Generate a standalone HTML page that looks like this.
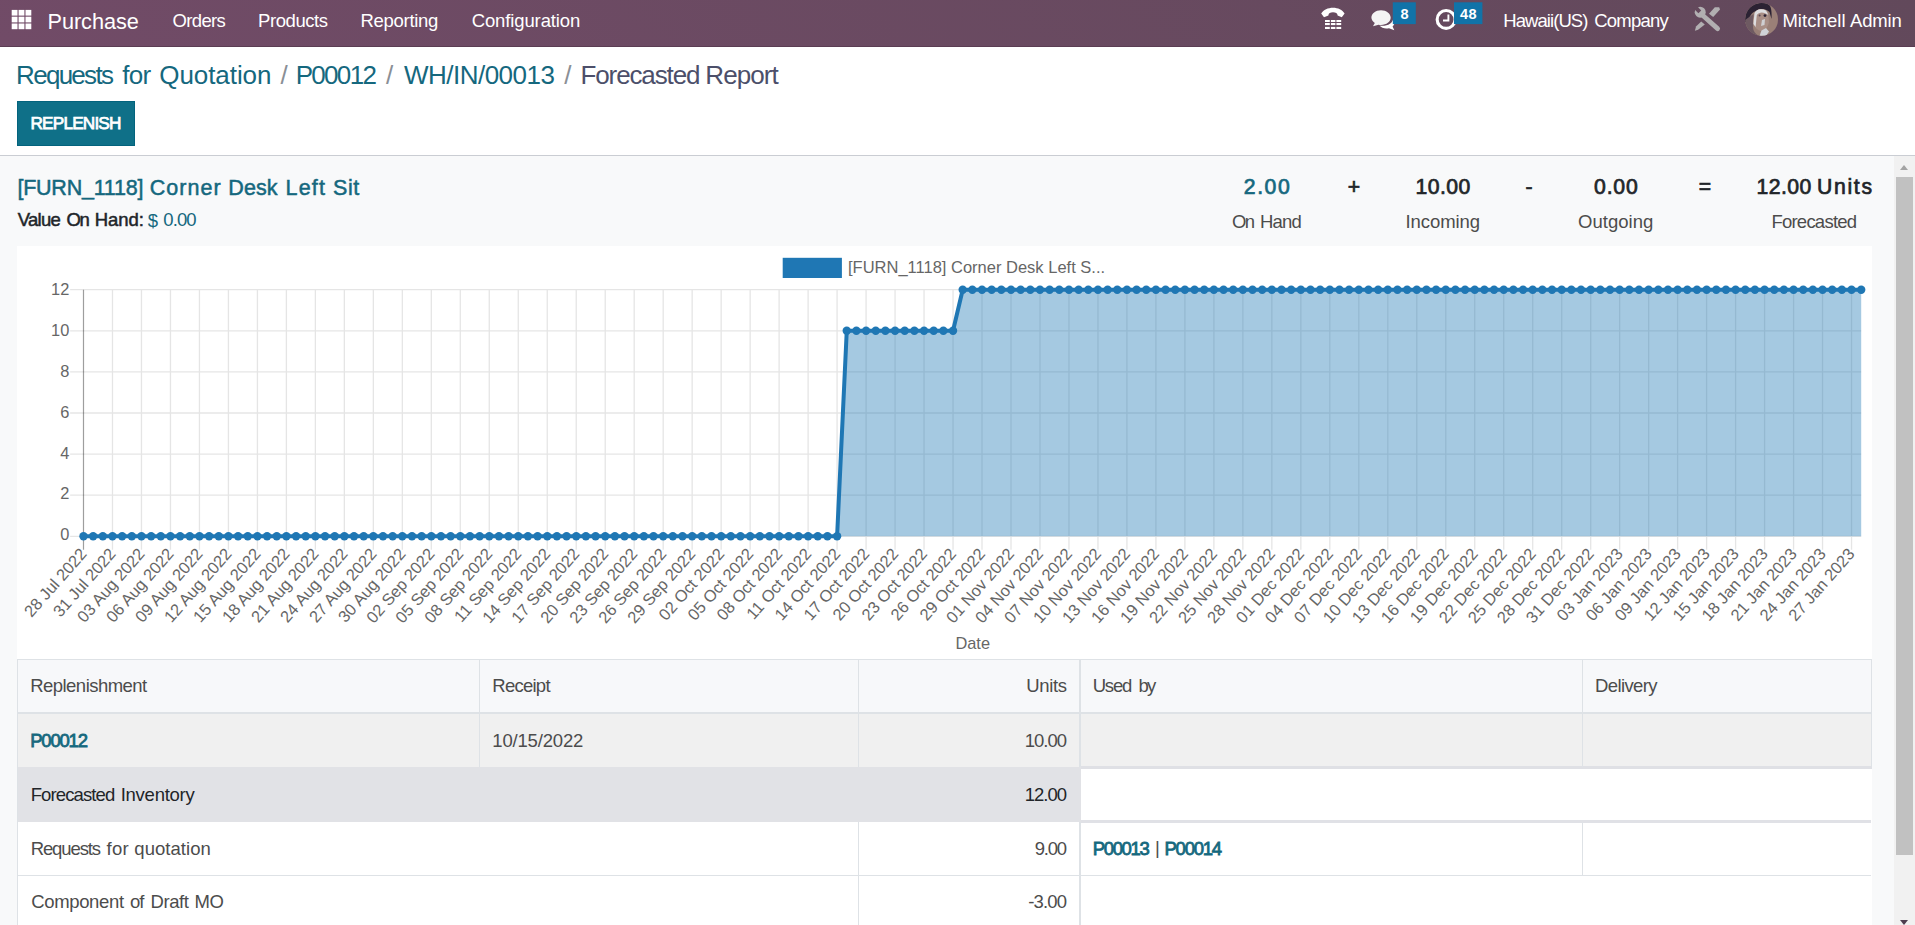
<!DOCTYPE html>
<html lang="en">
<head>
<meta charset="utf-8">
<title>Forecasted Report</title>
<style>
html,body{margin:0;padding:0;}
body{width:1915px;height:925px;overflow:hidden;position:relative;background:#f8f9fa;font-family:"Liberation Sans",sans-serif;color:#4c4c4c;}
.abs{position:absolute;}
.t{position:absolute;white-space:nowrap;line-height:1;}
#nav{left:0;top:0;width:1915px;height:46px;background:linear-gradient(45deg,#714b67,#62495b);border-bottom:1px solid #5b3d53;}
#nav .t{color:#fff;}
#cp{left:0;top:47px;width:1915px;height:108px;background:#fff;border-bottom:1px solid #cacdd3;}
#btn{left:17px;top:101px;width:118px;height:45px;background:#0f7088;box-sizing:border-box;border:1px solid #03637d;}
.link{color:#1b6779;}
#content{left:0;top:156px;width:1894px;height:769px;background:#f8f9fa;}
#chartbox{left:17px;top:246px;width:1855px;height:413px;background:#fff;}
svg.chart{position:absolute;left:0;top:0;font-family:"Liberation Sans",sans-serif;}
#sb{left:1894px;top:156px;width:21px;height:769px;background:#f1f1f1;}
#sbthumb{left:1896px;top:177px;width:17px;height:678px;background:#c1c1c1;}
.arr{position:absolute;width:0;height:0;border-left:4.6px solid transparent;border-right:4.6px solid transparent;}
.cell{position:absolute;box-sizing:border-box;}
</style>
</head>
<body>
<div id="nav" class="abs"></div>
<div id="cp" class="abs"></div>
<div id="content" class="abs"></div>
<div id="btn" class="abs"></div>
<div id="chartbox" class="abs"><svg class="chart" width="1855" height="413" viewBox="17 246 1855 413">
<path d="M112.48 289.70V549.7 M141.47 289.70V549.7 M170.45 289.70V549.7 M199.44 289.70V549.7 M228.42 289.70V549.7 M257.41 289.70V549.7 M286.39 289.70V549.7 M315.37 289.70V549.7 M344.36 289.70V549.7 M373.34 289.70V549.7 M402.33 289.70V549.7 M431.31 289.70V549.7 M460.29 289.70V549.7 M489.28 289.70V549.7 M518.26 289.70V549.7 M547.25 289.70V549.7 M576.23 289.70V549.7 M605.22 289.70V549.7 M634.20 289.70V549.7 M663.18 289.70V549.7 M692.17 289.70V549.7 M721.15 289.70V549.7 M750.14 289.70V549.7 M779.12 289.70V549.7 M808.11 289.70V549.7 M837.09 289.70V549.7 M866.07 289.70V549.7 M895.06 289.70V549.7 M924.04 289.70V549.7 M953.03 289.70V549.7 M982.01 289.70V549.7 M1010.99 289.70V549.7 M1039.98 289.70V549.7 M1068.96 289.70V549.7 M1097.95 289.70V549.7 M1126.93 289.70V549.7 M1155.92 289.70V549.7 M1184.90 289.70V549.7 M1213.88 289.70V549.7 M1242.87 289.70V549.7 M1271.85 289.70V549.7 M1300.84 289.70V549.7 M1329.82 289.70V549.7 M1358.80 289.70V549.7 M1387.79 289.70V549.7 M1416.77 289.70V549.7 M1445.76 289.70V549.7 M1474.74 289.70V549.7 M1503.73 289.70V549.7 M1532.71 289.70V549.7 M1561.69 289.70V549.7 M1590.68 289.70V549.7 M1619.66 289.70V549.7 M1648.65 289.70V549.7 M1677.63 289.70V549.7 M1706.62 289.70V549.7 M1735.60 289.70V549.7 M1764.58 289.70V549.7 M1793.57 289.70V549.7 M1822.55 289.70V549.7 M1851.54 289.70V549.7 M70.1 536.30H1861.20 M70.1 495.20H1861.20 M70.1 454.10H1861.20 M70.1 413.00H1861.20 M70.1 371.90H1861.20 M70.1 330.80H1861.20 M70.1 289.70H1861.20" stroke="#000" stroke-opacity="0.1" stroke-width="1.33" fill="none"/>
<path d="M83.50 289.70V549.7" stroke="#000" stroke-opacity="0.38" stroke-width="1.2" fill="none"/>
<path d="M83.50 536.30 L93.16 536.30 L102.82 536.30 L112.48 536.30 L122.15 536.30 L131.81 536.30 L141.47 536.30 L151.13 536.30 L160.79 536.30 L170.45 536.30 L180.11 536.30 L189.78 536.30 L199.44 536.30 L209.10 536.30 L218.76 536.30 L228.42 536.30 L238.08 536.30 L247.74 536.30 L257.41 536.30 L267.07 536.30 L276.73 536.30 L286.39 536.30 L296.05 536.30 L305.71 536.30 L315.37 536.30 L325.04 536.30 L334.70 536.30 L344.36 536.30 L354.02 536.30 L363.68 536.30 L373.34 536.30 L383.00 536.30 L392.66 536.30 L402.33 536.30 L411.99 536.30 L421.65 536.30 L431.31 536.30 L440.97 536.30 L450.63 536.30 L460.29 536.30 L469.96 536.30 L479.62 536.30 L489.28 536.30 L498.94 536.30 L508.60 536.30 L518.26 536.30 L527.92 536.30 L537.59 536.30 L547.25 536.30 L556.91 536.30 L566.57 536.30 L576.23 536.30 L585.89 536.30 L595.55 536.30 L605.22 536.30 L614.88 536.30 L624.54 536.30 L634.20 536.30 L643.86 536.30 L653.52 536.30 L663.18 536.30 L672.85 536.30 L682.51 536.30 L692.17 536.30 L701.83 536.30 L711.49 536.30 L721.15 536.30 L730.81 536.30 L740.48 536.30 L750.14 536.30 L759.80 536.30 L769.46 536.30 L779.12 536.30 L788.78 536.30 L798.44 536.30 L808.11 536.30 L817.77 536.30 L827.43 536.30 L837.09 536.30 L846.75 330.80 L856.41 330.80 L866.07 330.80 L875.73 330.80 L885.40 330.80 L895.06 330.80 L904.72 330.80 L914.38 330.80 L924.04 330.80 L933.70 330.80 L943.36 330.80 L953.03 330.80 L962.69 289.70 L972.35 289.70 L982.01 289.70 L991.67 289.70 L1001.33 289.70 L1010.99 289.70 L1020.66 289.70 L1030.32 289.70 L1039.98 289.70 L1049.64 289.70 L1059.30 289.70 L1068.96 289.70 L1078.62 289.70 L1088.29 289.70 L1097.95 289.70 L1107.61 289.70 L1117.27 289.70 L1126.93 289.70 L1136.59 289.70 L1146.25 289.70 L1155.92 289.70 L1165.58 289.70 L1175.24 289.70 L1184.90 289.70 L1194.56 289.70 L1204.22 289.70 L1213.88 289.70 L1223.55 289.70 L1233.21 289.70 L1242.87 289.70 L1252.53 289.70 L1262.19 289.70 L1271.85 289.70 L1281.51 289.70 L1291.17 289.70 L1300.84 289.70 L1310.50 289.70 L1320.16 289.70 L1329.82 289.70 L1339.48 289.70 L1349.14 289.70 L1358.80 289.70 L1368.47 289.70 L1378.13 289.70 L1387.79 289.70 L1397.45 289.70 L1407.11 289.70 L1416.77 289.70 L1426.43 289.70 L1436.10 289.70 L1445.76 289.70 L1455.42 289.70 L1465.08 289.70 L1474.74 289.70 L1484.40 289.70 L1494.06 289.70 L1503.73 289.70 L1513.39 289.70 L1523.05 289.70 L1532.71 289.70 L1542.37 289.70 L1552.03 289.70 L1561.69 289.70 L1571.36 289.70 L1581.02 289.70 L1590.68 289.70 L1600.34 289.70 L1610.00 289.70 L1619.66 289.70 L1629.32 289.70 L1638.99 289.70 L1648.65 289.70 L1658.31 289.70 L1667.97 289.70 L1677.63 289.70 L1687.29 289.70 L1696.95 289.70 L1706.62 289.70 L1716.28 289.70 L1725.94 289.70 L1735.60 289.70 L1745.26 289.70 L1754.92 289.70 L1764.58 289.70 L1774.25 289.70 L1783.91 289.70 L1793.57 289.70 L1803.23 289.70 L1812.89 289.70 L1822.55 289.70 L1832.21 289.70 L1841.87 289.70 L1851.54 289.70 L1861.20 289.70 L1861.20 536.3 L83.50 536.3 Z" fill="#1f77b4" fill-opacity="0.4"/>
<path d="M83.50 536.30 L93.16 536.30 L102.82 536.30 L112.48 536.30 L122.15 536.30 L131.81 536.30 L141.47 536.30 L151.13 536.30 L160.79 536.30 L170.45 536.30 L180.11 536.30 L189.78 536.30 L199.44 536.30 L209.10 536.30 L218.76 536.30 L228.42 536.30 L238.08 536.30 L247.74 536.30 L257.41 536.30 L267.07 536.30 L276.73 536.30 L286.39 536.30 L296.05 536.30 L305.71 536.30 L315.37 536.30 L325.04 536.30 L334.70 536.30 L344.36 536.30 L354.02 536.30 L363.68 536.30 L373.34 536.30 L383.00 536.30 L392.66 536.30 L402.33 536.30 L411.99 536.30 L421.65 536.30 L431.31 536.30 L440.97 536.30 L450.63 536.30 L460.29 536.30 L469.96 536.30 L479.62 536.30 L489.28 536.30 L498.94 536.30 L508.60 536.30 L518.26 536.30 L527.92 536.30 L537.59 536.30 L547.25 536.30 L556.91 536.30 L566.57 536.30 L576.23 536.30 L585.89 536.30 L595.55 536.30 L605.22 536.30 L614.88 536.30 L624.54 536.30 L634.20 536.30 L643.86 536.30 L653.52 536.30 L663.18 536.30 L672.85 536.30 L682.51 536.30 L692.17 536.30 L701.83 536.30 L711.49 536.30 L721.15 536.30 L730.81 536.30 L740.48 536.30 L750.14 536.30 L759.80 536.30 L769.46 536.30 L779.12 536.30 L788.78 536.30 L798.44 536.30 L808.11 536.30 L817.77 536.30 L827.43 536.30 L837.09 536.30 L846.75 330.80 L856.41 330.80 L866.07 330.80 L875.73 330.80 L885.40 330.80 L895.06 330.80 L904.72 330.80 L914.38 330.80 L924.04 330.80 L933.70 330.80 L943.36 330.80 L953.03 330.80 L962.69 289.70 L972.35 289.70 L982.01 289.70 L991.67 289.70 L1001.33 289.70 L1010.99 289.70 L1020.66 289.70 L1030.32 289.70 L1039.98 289.70 L1049.64 289.70 L1059.30 289.70 L1068.96 289.70 L1078.62 289.70 L1088.29 289.70 L1097.95 289.70 L1107.61 289.70 L1117.27 289.70 L1126.93 289.70 L1136.59 289.70 L1146.25 289.70 L1155.92 289.70 L1165.58 289.70 L1175.24 289.70 L1184.90 289.70 L1194.56 289.70 L1204.22 289.70 L1213.88 289.70 L1223.55 289.70 L1233.21 289.70 L1242.87 289.70 L1252.53 289.70 L1262.19 289.70 L1271.85 289.70 L1281.51 289.70 L1291.17 289.70 L1300.84 289.70 L1310.50 289.70 L1320.16 289.70 L1329.82 289.70 L1339.48 289.70 L1349.14 289.70 L1358.80 289.70 L1368.47 289.70 L1378.13 289.70 L1387.79 289.70 L1397.45 289.70 L1407.11 289.70 L1416.77 289.70 L1426.43 289.70 L1436.10 289.70 L1445.76 289.70 L1455.42 289.70 L1465.08 289.70 L1474.74 289.70 L1484.40 289.70 L1494.06 289.70 L1503.73 289.70 L1513.39 289.70 L1523.05 289.70 L1532.71 289.70 L1542.37 289.70 L1552.03 289.70 L1561.69 289.70 L1571.36 289.70 L1581.02 289.70 L1590.68 289.70 L1600.34 289.70 L1610.00 289.70 L1619.66 289.70 L1629.32 289.70 L1638.99 289.70 L1648.65 289.70 L1658.31 289.70 L1667.97 289.70 L1677.63 289.70 L1687.29 289.70 L1696.95 289.70 L1706.62 289.70 L1716.28 289.70 L1725.94 289.70 L1735.60 289.70 L1745.26 289.70 L1754.92 289.70 L1764.58 289.70 L1774.25 289.70 L1783.91 289.70 L1793.57 289.70 L1803.23 289.70 L1812.89 289.70 L1822.55 289.70 L1832.21 289.70 L1841.87 289.70 L1851.54 289.70 L1861.20 289.70" fill="none" stroke="#1f77b4" stroke-width="4" stroke-linejoin="round"/>
<g fill="#1f77b4"><circle cx="83.50" cy="536.30" r="4.2"/><circle cx="93.16" cy="536.30" r="4.2"/><circle cx="102.82" cy="536.30" r="4.2"/><circle cx="112.48" cy="536.30" r="4.2"/><circle cx="122.15" cy="536.30" r="4.2"/><circle cx="131.81" cy="536.30" r="4.2"/><circle cx="141.47" cy="536.30" r="4.2"/><circle cx="151.13" cy="536.30" r="4.2"/><circle cx="160.79" cy="536.30" r="4.2"/><circle cx="170.45" cy="536.30" r="4.2"/><circle cx="180.11" cy="536.30" r="4.2"/><circle cx="189.78" cy="536.30" r="4.2"/><circle cx="199.44" cy="536.30" r="4.2"/><circle cx="209.10" cy="536.30" r="4.2"/><circle cx="218.76" cy="536.30" r="4.2"/><circle cx="228.42" cy="536.30" r="4.2"/><circle cx="238.08" cy="536.30" r="4.2"/><circle cx="247.74" cy="536.30" r="4.2"/><circle cx="257.41" cy="536.30" r="4.2"/><circle cx="267.07" cy="536.30" r="4.2"/><circle cx="276.73" cy="536.30" r="4.2"/><circle cx="286.39" cy="536.30" r="4.2"/><circle cx="296.05" cy="536.30" r="4.2"/><circle cx="305.71" cy="536.30" r="4.2"/><circle cx="315.37" cy="536.30" r="4.2"/><circle cx="325.04" cy="536.30" r="4.2"/><circle cx="334.70" cy="536.30" r="4.2"/><circle cx="344.36" cy="536.30" r="4.2"/><circle cx="354.02" cy="536.30" r="4.2"/><circle cx="363.68" cy="536.30" r="4.2"/><circle cx="373.34" cy="536.30" r="4.2"/><circle cx="383.00" cy="536.30" r="4.2"/><circle cx="392.66" cy="536.30" r="4.2"/><circle cx="402.33" cy="536.30" r="4.2"/><circle cx="411.99" cy="536.30" r="4.2"/><circle cx="421.65" cy="536.30" r="4.2"/><circle cx="431.31" cy="536.30" r="4.2"/><circle cx="440.97" cy="536.30" r="4.2"/><circle cx="450.63" cy="536.30" r="4.2"/><circle cx="460.29" cy="536.30" r="4.2"/><circle cx="469.96" cy="536.30" r="4.2"/><circle cx="479.62" cy="536.30" r="4.2"/><circle cx="489.28" cy="536.30" r="4.2"/><circle cx="498.94" cy="536.30" r="4.2"/><circle cx="508.60" cy="536.30" r="4.2"/><circle cx="518.26" cy="536.30" r="4.2"/><circle cx="527.92" cy="536.30" r="4.2"/><circle cx="537.59" cy="536.30" r="4.2"/><circle cx="547.25" cy="536.30" r="4.2"/><circle cx="556.91" cy="536.30" r="4.2"/><circle cx="566.57" cy="536.30" r="4.2"/><circle cx="576.23" cy="536.30" r="4.2"/><circle cx="585.89" cy="536.30" r="4.2"/><circle cx="595.55" cy="536.30" r="4.2"/><circle cx="605.22" cy="536.30" r="4.2"/><circle cx="614.88" cy="536.30" r="4.2"/><circle cx="624.54" cy="536.30" r="4.2"/><circle cx="634.20" cy="536.30" r="4.2"/><circle cx="643.86" cy="536.30" r="4.2"/><circle cx="653.52" cy="536.30" r="4.2"/><circle cx="663.18" cy="536.30" r="4.2"/><circle cx="672.85" cy="536.30" r="4.2"/><circle cx="682.51" cy="536.30" r="4.2"/><circle cx="692.17" cy="536.30" r="4.2"/><circle cx="701.83" cy="536.30" r="4.2"/><circle cx="711.49" cy="536.30" r="4.2"/><circle cx="721.15" cy="536.30" r="4.2"/><circle cx="730.81" cy="536.30" r="4.2"/><circle cx="740.48" cy="536.30" r="4.2"/><circle cx="750.14" cy="536.30" r="4.2"/><circle cx="759.80" cy="536.30" r="4.2"/><circle cx="769.46" cy="536.30" r="4.2"/><circle cx="779.12" cy="536.30" r="4.2"/><circle cx="788.78" cy="536.30" r="4.2"/><circle cx="798.44" cy="536.30" r="4.2"/><circle cx="808.11" cy="536.30" r="4.2"/><circle cx="817.77" cy="536.30" r="4.2"/><circle cx="827.43" cy="536.30" r="4.2"/><circle cx="837.09" cy="536.30" r="4.2"/><circle cx="846.75" cy="330.80" r="4.2"/><circle cx="856.41" cy="330.80" r="4.2"/><circle cx="866.07" cy="330.80" r="4.2"/><circle cx="875.73" cy="330.80" r="4.2"/><circle cx="885.40" cy="330.80" r="4.2"/><circle cx="895.06" cy="330.80" r="4.2"/><circle cx="904.72" cy="330.80" r="4.2"/><circle cx="914.38" cy="330.80" r="4.2"/><circle cx="924.04" cy="330.80" r="4.2"/><circle cx="933.70" cy="330.80" r="4.2"/><circle cx="943.36" cy="330.80" r="4.2"/><circle cx="953.03" cy="330.80" r="4.2"/><circle cx="962.69" cy="289.70" r="4.2"/><circle cx="972.35" cy="289.70" r="4.2"/><circle cx="982.01" cy="289.70" r="4.2"/><circle cx="991.67" cy="289.70" r="4.2"/><circle cx="1001.33" cy="289.70" r="4.2"/><circle cx="1010.99" cy="289.70" r="4.2"/><circle cx="1020.66" cy="289.70" r="4.2"/><circle cx="1030.32" cy="289.70" r="4.2"/><circle cx="1039.98" cy="289.70" r="4.2"/><circle cx="1049.64" cy="289.70" r="4.2"/><circle cx="1059.30" cy="289.70" r="4.2"/><circle cx="1068.96" cy="289.70" r="4.2"/><circle cx="1078.62" cy="289.70" r="4.2"/><circle cx="1088.29" cy="289.70" r="4.2"/><circle cx="1097.95" cy="289.70" r="4.2"/><circle cx="1107.61" cy="289.70" r="4.2"/><circle cx="1117.27" cy="289.70" r="4.2"/><circle cx="1126.93" cy="289.70" r="4.2"/><circle cx="1136.59" cy="289.70" r="4.2"/><circle cx="1146.25" cy="289.70" r="4.2"/><circle cx="1155.92" cy="289.70" r="4.2"/><circle cx="1165.58" cy="289.70" r="4.2"/><circle cx="1175.24" cy="289.70" r="4.2"/><circle cx="1184.90" cy="289.70" r="4.2"/><circle cx="1194.56" cy="289.70" r="4.2"/><circle cx="1204.22" cy="289.70" r="4.2"/><circle cx="1213.88" cy="289.70" r="4.2"/><circle cx="1223.55" cy="289.70" r="4.2"/><circle cx="1233.21" cy="289.70" r="4.2"/><circle cx="1242.87" cy="289.70" r="4.2"/><circle cx="1252.53" cy="289.70" r="4.2"/><circle cx="1262.19" cy="289.70" r="4.2"/><circle cx="1271.85" cy="289.70" r="4.2"/><circle cx="1281.51" cy="289.70" r="4.2"/><circle cx="1291.17" cy="289.70" r="4.2"/><circle cx="1300.84" cy="289.70" r="4.2"/><circle cx="1310.50" cy="289.70" r="4.2"/><circle cx="1320.16" cy="289.70" r="4.2"/><circle cx="1329.82" cy="289.70" r="4.2"/><circle cx="1339.48" cy="289.70" r="4.2"/><circle cx="1349.14" cy="289.70" r="4.2"/><circle cx="1358.80" cy="289.70" r="4.2"/><circle cx="1368.47" cy="289.70" r="4.2"/><circle cx="1378.13" cy="289.70" r="4.2"/><circle cx="1387.79" cy="289.70" r="4.2"/><circle cx="1397.45" cy="289.70" r="4.2"/><circle cx="1407.11" cy="289.70" r="4.2"/><circle cx="1416.77" cy="289.70" r="4.2"/><circle cx="1426.43" cy="289.70" r="4.2"/><circle cx="1436.10" cy="289.70" r="4.2"/><circle cx="1445.76" cy="289.70" r="4.2"/><circle cx="1455.42" cy="289.70" r="4.2"/><circle cx="1465.08" cy="289.70" r="4.2"/><circle cx="1474.74" cy="289.70" r="4.2"/><circle cx="1484.40" cy="289.70" r="4.2"/><circle cx="1494.06" cy="289.70" r="4.2"/><circle cx="1503.73" cy="289.70" r="4.2"/><circle cx="1513.39" cy="289.70" r="4.2"/><circle cx="1523.05" cy="289.70" r="4.2"/><circle cx="1532.71" cy="289.70" r="4.2"/><circle cx="1542.37" cy="289.70" r="4.2"/><circle cx="1552.03" cy="289.70" r="4.2"/><circle cx="1561.69" cy="289.70" r="4.2"/><circle cx="1571.36" cy="289.70" r="4.2"/><circle cx="1581.02" cy="289.70" r="4.2"/><circle cx="1590.68" cy="289.70" r="4.2"/><circle cx="1600.34" cy="289.70" r="4.2"/><circle cx="1610.00" cy="289.70" r="4.2"/><circle cx="1619.66" cy="289.70" r="4.2"/><circle cx="1629.32" cy="289.70" r="4.2"/><circle cx="1638.99" cy="289.70" r="4.2"/><circle cx="1648.65" cy="289.70" r="4.2"/><circle cx="1658.31" cy="289.70" r="4.2"/><circle cx="1667.97" cy="289.70" r="4.2"/><circle cx="1677.63" cy="289.70" r="4.2"/><circle cx="1687.29" cy="289.70" r="4.2"/><circle cx="1696.95" cy="289.70" r="4.2"/><circle cx="1706.62" cy="289.70" r="4.2"/><circle cx="1716.28" cy="289.70" r="4.2"/><circle cx="1725.94" cy="289.70" r="4.2"/><circle cx="1735.60" cy="289.70" r="4.2"/><circle cx="1745.26" cy="289.70" r="4.2"/><circle cx="1754.92" cy="289.70" r="4.2"/><circle cx="1764.58" cy="289.70" r="4.2"/><circle cx="1774.25" cy="289.70" r="4.2"/><circle cx="1783.91" cy="289.70" r="4.2"/><circle cx="1793.57" cy="289.70" r="4.2"/><circle cx="1803.23" cy="289.70" r="4.2"/><circle cx="1812.89" cy="289.70" r="4.2"/><circle cx="1822.55" cy="289.70" r="4.2"/><circle cx="1832.21" cy="289.70" r="4.2"/><circle cx="1841.87" cy="289.70" r="4.2"/><circle cx="1851.54" cy="289.70" r="4.2"/><circle cx="1861.20" cy="289.70" r="4.2"/></g>
<rect x="782.7" y="257.8" width="59.2" height="20.2" fill="#1f77b4"/>
<text x="848" y="272.9" font-size="16.5" fill="#666">[FURN_1118] Corner Desk Left S...</text>
<text x="69.3" y="540.40" font-size="16.4" fill="#666" text-anchor="end">0</text>
<text x="69.3" y="499.49" font-size="16.4" fill="#666" text-anchor="end">2</text>
<text x="69.3" y="458.58" font-size="16.4" fill="#666" text-anchor="end">4</text>
<text x="69.3" y="417.68" font-size="16.4" fill="#666" text-anchor="end">6</text>
<text x="69.3" y="376.77" font-size="16.4" fill="#666" text-anchor="end">8</text>
<text x="69.3" y="335.86" font-size="16.4" fill="#666" text-anchor="end">10</text>
<text x="69.3" y="294.95" font-size="16.4" fill="#666" text-anchor="end">12</text>
<text transform="translate(83.20 550.6) rotate(-48.5)" dy="0.36em" font-size="16.4" fill="#666" text-anchor="end">28 Jul 2022</text>
<text transform="translate(112.18 550.6) rotate(-48.5)" dy="0.36em" font-size="16.4" fill="#666" text-anchor="end">31 Jul 2022</text>
<text transform="translate(141.17 550.6) rotate(-48.5)" dy="0.36em" font-size="16.4" fill="#666" text-anchor="end">03 Aug 2022</text>
<text transform="translate(170.15 550.6) rotate(-48.5)" dy="0.36em" font-size="16.4" fill="#666" text-anchor="end">06 Aug 2022</text>
<text transform="translate(199.14 550.6) rotate(-48.5)" dy="0.36em" font-size="16.4" fill="#666" text-anchor="end">09 Aug 2022</text>
<text transform="translate(228.12 550.6) rotate(-48.5)" dy="0.36em" font-size="16.4" fill="#666" text-anchor="end">12 Aug 2022</text>
<text transform="translate(257.11 550.6) rotate(-48.5)" dy="0.36em" font-size="16.4" fill="#666" text-anchor="end">15 Aug 2022</text>
<text transform="translate(286.09 550.6) rotate(-48.5)" dy="0.36em" font-size="16.4" fill="#666" text-anchor="end">18 Aug 2022</text>
<text transform="translate(315.07 550.6) rotate(-48.5)" dy="0.36em" font-size="16.4" fill="#666" text-anchor="end">21 Aug 2022</text>
<text transform="translate(344.06 550.6) rotate(-48.5)" dy="0.36em" font-size="16.4" fill="#666" text-anchor="end">24 Aug 2022</text>
<text transform="translate(373.04 550.6) rotate(-48.5)" dy="0.36em" font-size="16.4" fill="#666" text-anchor="end">27 Aug 2022</text>
<text transform="translate(402.03 550.6) rotate(-48.5)" dy="0.36em" font-size="16.4" fill="#666" text-anchor="end">30 Aug 2022</text>
<text transform="translate(431.01 550.6) rotate(-48.5)" dy="0.36em" font-size="16.4" fill="#666" text-anchor="end">02 Sep 2022</text>
<text transform="translate(459.99 550.6) rotate(-48.5)" dy="0.36em" font-size="16.4" fill="#666" text-anchor="end">05 Sep 2022</text>
<text transform="translate(488.98 550.6) rotate(-48.5)" dy="0.36em" font-size="16.4" fill="#666" text-anchor="end">08 Sep 2022</text>
<text transform="translate(517.96 550.6) rotate(-48.5)" dy="0.36em" font-size="16.4" fill="#666" text-anchor="end">11 Sep 2022</text>
<text transform="translate(546.95 550.6) rotate(-48.5)" dy="0.36em" font-size="16.4" fill="#666" text-anchor="end">14 Sep 2022</text>
<text transform="translate(575.93 550.6) rotate(-48.5)" dy="0.36em" font-size="16.4" fill="#666" text-anchor="end">17 Sep 2022</text>
<text transform="translate(604.92 550.6) rotate(-48.5)" dy="0.36em" font-size="16.4" fill="#666" text-anchor="end">20 Sep 2022</text>
<text transform="translate(633.90 550.6) rotate(-48.5)" dy="0.36em" font-size="16.4" fill="#666" text-anchor="end">23 Sep 2022</text>
<text transform="translate(662.88 550.6) rotate(-48.5)" dy="0.36em" font-size="16.4" fill="#666" text-anchor="end">26 Sep 2022</text>
<text transform="translate(691.87 550.6) rotate(-48.5)" dy="0.36em" font-size="16.4" fill="#666" text-anchor="end">29 Sep 2022</text>
<text transform="translate(720.85 550.6) rotate(-48.5)" dy="0.36em" font-size="16.4" fill="#666" text-anchor="end">02 Oct 2022</text>
<text transform="translate(749.84 550.6) rotate(-48.5)" dy="0.36em" font-size="16.4" fill="#666" text-anchor="end">05 Oct 2022</text>
<text transform="translate(778.82 550.6) rotate(-48.5)" dy="0.36em" font-size="16.4" fill="#666" text-anchor="end">08 Oct 2022</text>
<text transform="translate(807.81 550.6) rotate(-48.5)" dy="0.36em" font-size="16.4" fill="#666" text-anchor="end">11 Oct 2022</text>
<text transform="translate(836.79 550.6) rotate(-48.5)" dy="0.36em" font-size="16.4" fill="#666" text-anchor="end">14 Oct 2022</text>
<text transform="translate(865.77 550.6) rotate(-48.5)" dy="0.36em" font-size="16.4" fill="#666" text-anchor="end">17 Oct 2022</text>
<text transform="translate(894.76 550.6) rotate(-48.5)" dy="0.36em" font-size="16.4" fill="#666" text-anchor="end">20 Oct 2022</text>
<text transform="translate(923.74 550.6) rotate(-48.5)" dy="0.36em" font-size="16.4" fill="#666" text-anchor="end">23 Oct 2022</text>
<text transform="translate(952.73 550.6) rotate(-48.5)" dy="0.36em" font-size="16.4" fill="#666" text-anchor="end">26 Oct 2022</text>
<text transform="translate(981.71 550.6) rotate(-48.5)" dy="0.36em" font-size="16.4" fill="#666" text-anchor="end">29 Oct 2022</text>
<text transform="translate(1010.69 550.6) rotate(-48.5)" dy="0.36em" font-size="16.4" fill="#666" text-anchor="end">01 Nov 2022</text>
<text transform="translate(1039.68 550.6) rotate(-48.5)" dy="0.36em" font-size="16.4" fill="#666" text-anchor="end">04 Nov 2022</text>
<text transform="translate(1068.66 550.6) rotate(-48.5)" dy="0.36em" font-size="16.4" fill="#666" text-anchor="end">07 Nov 2022</text>
<text transform="translate(1097.65 550.6) rotate(-48.5)" dy="0.36em" font-size="16.4" fill="#666" text-anchor="end">10 Nov 2022</text>
<text transform="translate(1126.63 550.6) rotate(-48.5)" dy="0.36em" font-size="16.4" fill="#666" text-anchor="end">13 Nov 2022</text>
<text transform="translate(1155.62 550.6) rotate(-48.5)" dy="0.36em" font-size="16.4" fill="#666" text-anchor="end">16 Nov 2022</text>
<text transform="translate(1184.60 550.6) rotate(-48.5)" dy="0.36em" font-size="16.4" fill="#666" text-anchor="end">19 Nov 2022</text>
<text transform="translate(1213.58 550.6) rotate(-48.5)" dy="0.36em" font-size="16.4" fill="#666" text-anchor="end">22 Nov 2022</text>
<text transform="translate(1242.57 550.6) rotate(-48.5)" dy="0.36em" font-size="16.4" fill="#666" text-anchor="end">25 Nov 2022</text>
<text transform="translate(1271.55 550.6) rotate(-48.5)" dy="0.36em" font-size="16.4" fill="#666" text-anchor="end">28 Nov 2022</text>
<text transform="translate(1300.54 550.6) rotate(-48.5)" dy="0.36em" font-size="16.4" fill="#666" text-anchor="end">01 Dec 2022</text>
<text transform="translate(1329.52 550.6) rotate(-48.5)" dy="0.36em" font-size="16.4" fill="#666" text-anchor="end">04 Dec 2022</text>
<text transform="translate(1358.50 550.6) rotate(-48.5)" dy="0.36em" font-size="16.4" fill="#666" text-anchor="end">07 Dec 2022</text>
<text transform="translate(1387.49 550.6) rotate(-48.5)" dy="0.36em" font-size="16.4" fill="#666" text-anchor="end">10 Dec 2022</text>
<text transform="translate(1416.47 550.6) rotate(-48.5)" dy="0.36em" font-size="16.4" fill="#666" text-anchor="end">13 Dec 2022</text>
<text transform="translate(1445.46 550.6) rotate(-48.5)" dy="0.36em" font-size="16.4" fill="#666" text-anchor="end">16 Dec 2022</text>
<text transform="translate(1474.44 550.6) rotate(-48.5)" dy="0.36em" font-size="16.4" fill="#666" text-anchor="end">19 Dec 2022</text>
<text transform="translate(1503.43 550.6) rotate(-48.5)" dy="0.36em" font-size="16.4" fill="#666" text-anchor="end">22 Dec 2022</text>
<text transform="translate(1532.41 550.6) rotate(-48.5)" dy="0.36em" font-size="16.4" fill="#666" text-anchor="end">25 Dec 2022</text>
<text transform="translate(1561.39 550.6) rotate(-48.5)" dy="0.36em" font-size="16.4" fill="#666" text-anchor="end">28 Dec 2022</text>
<text transform="translate(1590.38 550.6) rotate(-48.5)" dy="0.36em" font-size="16.4" fill="#666" text-anchor="end">31 Dec 2022</text>
<text transform="translate(1619.36 550.6) rotate(-48.5)" dy="0.36em" font-size="16.4" fill="#666" text-anchor="end">03 Jan 2023</text>
<text transform="translate(1648.35 550.6) rotate(-48.5)" dy="0.36em" font-size="16.4" fill="#666" text-anchor="end">06 Jan 2023</text>
<text transform="translate(1677.33 550.6) rotate(-48.5)" dy="0.36em" font-size="16.4" fill="#666" text-anchor="end">09 Jan 2023</text>
<text transform="translate(1706.32 550.6) rotate(-48.5)" dy="0.36em" font-size="16.4" fill="#666" text-anchor="end">12 Jan 2023</text>
<text transform="translate(1735.30 550.6) rotate(-48.5)" dy="0.36em" font-size="16.4" fill="#666" text-anchor="end">15 Jan 2023</text>
<text transform="translate(1764.28 550.6) rotate(-48.5)" dy="0.36em" font-size="16.4" fill="#666" text-anchor="end">18 Jan 2023</text>
<text transform="translate(1793.27 550.6) rotate(-48.5)" dy="0.36em" font-size="16.4" fill="#666" text-anchor="end">21 Jan 2023</text>
<text transform="translate(1822.25 550.6) rotate(-48.5)" dy="0.36em" font-size="16.4" fill="#666" text-anchor="end">24 Jan 2023</text>
<text transform="translate(1851.24 550.6) rotate(-48.5)" dy="0.36em" font-size="16.4" fill="#666" text-anchor="end">27 Jan 2023</text>
<text x="972.7" y="648.9" font-size="16.4" fill="#666" text-anchor="middle">Date</text>
</svg></div>
<div class="cell" style="left:17px;top:659px;width:1855px;height:54px;background:#f7f8fa;"></div>
<div class="cell" style="left:17px;top:713px;width:1855px;height:54px;background:#f0f0f0;"></div>
<div class="cell" style="left:17px;top:767px;width:1063.7px;height:55.39999999999998px;background:#e1e2e6;"></div>
<div class="cell" style="left:1080.7px;top:767px;width:791.3px;height:55.39999999999998px;background:#ffffff;"></div>
<div class="cell" style="left:17px;top:822px;width:1855px;height:103px;background:#ffffff;"></div>
<div class="cell" style="left:17px;top:659px;width:1855px;height:1px;background:#dee2e6;"></div>
<div class="cell" style="left:17px;top:711.5px;width:1855px;height:2.0px;background:#dee2e6;"></div>
<div class="cell" style="left:1080.7px;top:766.3px;width:791.3px;height:2.7999999999999545px;background:#dfe0e5;"></div>
<div class="cell" style="left:1080.7px;top:820px;width:790.3px;height:3px;background:#e0e1e6;"></div>
<div class="cell" style="left:17px;top:875px;width:1854px;height:1px;background:#dee2e6;"></div>
<div class="cell" style="left:17px;top:659px;width:1px;height:266px;background:#dee2e6;"></div>
<div class="cell" style="left:1871px;top:659px;width:1px;height:108px;background:#dee2e6;"></div>
<div class="cell" style="left:479px;top:659px;width:1px;height:108px;background:#dee2e6;"></div>
<div class="cell" style="left:858px;top:659px;width:1px;height:108px;background:#dee2e6;"></div>
<div class="cell" style="left:1079.3px;top:659px;width:1.400000000000091px;height:108px;background:#dee2e6;"></div>
<div class="cell" style="left:1581.5px;top:659px;width:1.400000000000091px;height:108px;background:#dee2e6;"></div>
<div class="cell" style="left:858px;top:822px;width:1px;height:103px;background:#dee2e6;"></div>
<div class="cell" style="left:1079.3px;top:822px;width:1.400000000000091px;height:103px;background:#dee2e6;"></div>
<div class="cell" style="left:1581.5px;top:822px;width:1.400000000000091px;height:53px;background:#dee2e6;"></div>
<div id="sb" class="abs"></div>
<div id="sbthumb" class="abs"></div>
<div class="arr" style="left:1900px;top:165px;border-bottom:5px solid #a3a3a3"></div>
<div class="arr" style="left:1900px;top:920px;border-top:5px solid #4f3d4f"></div>
<svg class="abs" style="left:0;top:0" width="1915" height="46" viewBox="0 0 1915 46"><g fill="#fff"><rect x="11.7" y="9.9" width="5.8" height="5.7"/><rect x="18.6" y="9.9" width="5.8" height="5.7"/><rect x="25.5" y="9.9" width="5.8" height="5.7"/><rect x="11.7" y="16.7" width="5.8" height="5.7"/><rect x="18.6" y="16.7" width="5.8" height="5.7"/><rect x="25.5" y="16.7" width="5.8" height="5.7"/><rect x="11.7" y="23.5" width="5.8" height="5.7"/><rect x="18.6" y="23.5" width="5.8" height="5.7"/><rect x="25.5" y="23.5" width="5.8" height="5.7"/></g><!-- phone -->
<g fill="#fff">
<path d="M1321.2 13.6 C1323.5 9.8 1328 7.7 1333 7.7 C1338 7.7 1342.3 9.8 1344.6 13.6 L1341.8 17.3 L1337.6 15.6 C1337.6 13.2 1335.6 12.3 1333 12.3 C1330.4 12.3 1328.4 13.2 1328.4 15.6 L1324 17.3 Z"/>
<rect x="1325" y="20" width="4.8" height="2"/><rect x="1330.9" y="20" width="4.5" height="2"/><rect x="1336.4" y="20" width="4.8" height="2"/>
<rect x="1325" y="23" width="4.8" height="2.1"/><rect x="1330.9" y="23" width="4.5" height="2.1"/><rect x="1336.4" y="23" width="4.8" height="2.1"/>
<rect x="1325" y="26.9" width="4.8" height="2.1"/><rect x="1330.9" y="26.9" width="4.5" height="2.1"/><rect x="1336.4" y="26.9" width="4.8" height="2.1"/>
</g>
<!-- chat -->
<g>
<path fill="#fff" d="M1379.5 25.6 C1381.5 28.2 1385.5 29 1389 28.2 L1394.3 30.2 L1392.6 26.4 C1395.2 24.2 1395.4 20.6 1393.2 18.2 C1393 23.4 1387 26.6 1379.5 25.6 Z"/>
<path fill="#f4f4f4" d="M1381 10.2 C1386.4 10.2 1390.7 13.5 1390.7 17.6 C1390.7 21.7 1386.4 25 1381 25 C1380.2 25 1379.4 24.9 1378.6 24.8 L1373 26.2 L1374.8 22.9 C1372.7 21.6 1371.4 19.7 1371.4 17.6 C1371.4 13.5 1375.6 10.2 1381 10.2 Z"/>
</g>
<!-- clock -->
<circle cx="1446.1" cy="19.4" r="8.95" fill="none" stroke="#fff" stroke-width="3.1"/>
<path d="M1448.4 14.4V20.5H1443" fill="none" stroke="#fff" stroke-width="1.9"/>
<!-- badges -->
<rect x="1392.8" y="2.3" width="23" height="21.8" fill="#1173a8"/>
<rect x="1454" y="2.3" width="28.4" height="21.8" fill="#1173a8"/>
<!-- tools -->
<g fill="#b1afb1">
<path d="M1702 14.8 L1717.6 28.6" stroke="#b1afb1" stroke-width="4.8" stroke-linecap="round" fill="none"/>
<circle cx="1700.2" cy="12.2" r="5.5"/>
<path d="M1699.8 11.8 L1693 5" stroke="#64495c" stroke-width="4" fill="none"/>
<path d="M1709 13.8 L1714.8 7.3 L1719.2 7.2 L1720 9.4 L1713.2 17 Z"/>
<path d="M1701.2 21.4 L1704.8 24.6 L1698.1 29.8 L1694.9 30.8 L1696 26.6 Z"/>
</g>
<!-- avatar -->
<clipPath id="avc"><circle cx="1761.6" cy="19.4" r="16.4"/></clipPath>
<g clip-path="url(#avc)">
<rect x="1745" y="3" width="34" height="33" fill="#9a8077"/>
<path d="M1745 22 C1744 8 1754 2 1764 3 C1771 3.5 1772 8 1771.5 19 L1769.5 12 C1766 8.5 1759 8 1756 11 C1751 13 1749 17 1748.5 22 Z" fill="#2b2233"/>
<path d="M1745 20 L1753.5 14 L1753 27 C1753 31 1756 35 1760 36.5 L1752 36 C1748 32 1745 28 1745 20 Z" fill="#6e5a62"/>
<path d="M1755 13 C1758 8 1764 8 1768 12 L1769 22 C1768 27 1765 31 1761 31 C1756 30 1753 25 1753 20 Z" fill="#a98f86"/>
<path d="M1754.5 13 C1756 9.5 1761 8 1766 10.5 L1768.4 15 C1764 11.5 1759 11.5 1756.8 15 L1755.6 27 L1753.4 24 Z" fill="#dedee0"/>
<path d="M1759.5 36 L1761.5 30.5 L1766 28 L1769 31.5 L1766 36 Z" fill="#d0d3d8"/>
<circle cx="1765" cy="15.6" r="1.4" fill="#2b2233"/><circle cx="1759.6" cy="15.6" r="1" fill="#5a4650"/>
<path d="M1762 20 L1765 19 L1764.5 25 L1761 26Z" fill="#cfcfd2"/>
</g>
</svg>
<span class="t" style="left:47.50px;top:11.43px;font-size:21.7px;font-weight:400;color:#ffffff;letter-spacing:-0.051px;">Purchase</span>
<span class="t" style="left:172.40px;top:12.24px;font-size:18.5px;font-weight:400;color:#ffffff;letter-spacing:-0.618px;">Orders</span>
<span class="t" style="left:258.10px;top:12.24px;font-size:18.5px;font-weight:400;color:#ffffff;letter-spacing:-0.437px;">Products</span>
<span class="t" style="left:360.40px;top:12.24px;font-size:18.5px;font-weight:400;color:#ffffff;letter-spacing:-0.278px;">Reporting</span>
<span class="t" style="left:471.70px;top:12.24px;font-size:18.5px;font-weight:400;color:#ffffff;letter-spacing:-0.121px;">Configuration</span>
<span class="g"><span class="t" style="left:1503.30px;top:12.24px;font-size:18.5px;font-weight:400;color:#ffffff;letter-spacing:-0.942px;">Hawaii(US)</span> <span class="t" style="left:1594.20px;top:12.24px;font-size:18.5px;font-weight:400;color:#ffffff;letter-spacing:-0.788px;">Company</span></span>
<span class="g"><span class="t" style="left:1782.40px;top:12.24px;font-size:18.5px;font-weight:400;color:#ffffff;letter-spacing:0.057px;">Mitchell</span> <span class="t" style="left:1850.00px;top:12.24px;font-size:18.5px;font-weight:400;color:#ffffff;letter-spacing:-0.162px;">Admin</span></span>
<span class="t" style="left:1400.40px;top:6.63px;font-size:14.5px;font-weight:700;color:#ffffff;letter-spacing:0.000px;">8</span>
<span class="t" style="left:1460.00px;top:6.63px;font-size:14.5px;font-weight:700;color:#ffffff;letter-spacing:0.336px;">48</span>
<span class="g"><span class="t" style="left:16.10px;top:62.19px;font-size:26px;font-weight:400;color:#15687e;letter-spacing:-1.720px;">Requests</span> <span class="t" style="left:122.30px;top:62.19px;font-size:26px;font-weight:400;color:#15687e;letter-spacing:-0.692px;">for</span> <span class="t" style="left:159.30px;top:62.19px;font-size:26px;font-weight:400;color:#15687e;letter-spacing:-0.073px;">Quotation</span></span>
<span class="t" style="left:280.45px;top:62.19px;font-size:26px;font-weight:400;color:#8a8f96;letter-spacing:0.000px;">/</span>
<span class="t" style="left:295.70px;top:62.19px;font-size:26px;font-weight:400;color:#15687e;letter-spacing:-1.696px;">P00012</span>
<span class="t" style="left:386.00px;top:62.19px;font-size:26px;font-weight:400;color:#8a8f96;letter-spacing:0.000px;">/</span>
<span class="t" style="left:404.00px;top:62.19px;font-size:26px;font-weight:400;color:#15687e;letter-spacing:-0.520px;">WH/IN/00013</span>
<span class="t" style="left:564.20px;top:62.19px;font-size:26px;font-weight:400;color:#8a8f96;letter-spacing:0.000px;">/</span>
<span class="g"><span class="t" style="left:580.50px;top:62.19px;font-size:26px;font-weight:400;color:#4c4f6a;letter-spacing:-1.123px;">Forecasted</span> <span class="t" style="left:705.30px;top:62.19px;font-size:26px;font-weight:400;color:#4c4f6a;letter-spacing:-0.943px;">Report</span></span>
<span class="t" style="left:30.50px;top:115.04px;font-size:17.2px;font-weight:400;color:#ffffff;letter-spacing:-0.814px;-webkit-text-stroke:0.75px #fff;">REPLENISH</span>
<span class="g"><span class="t" style="left:17.40px;top:177.60px;font-size:21.5px;font-weight:400;color:#15687e;letter-spacing:-0.218px;-webkit-text-stroke:0.5px #15687e;">[FURN_1118]</span> <span class="t" style="left:149.80px;top:177.60px;font-size:21.5px;font-weight:400;color:#15687e;letter-spacing:1.008px;-webkit-text-stroke:0.5px #15687e;">Corner</span> <span class="t" style="left:228.30px;top:177.60px;font-size:21.5px;font-weight:400;color:#15687e;letter-spacing:0.089px;-webkit-text-stroke:0.5px #15687e;">Desk</span> <span class="t" style="left:285.60px;top:177.60px;font-size:21.5px;font-weight:400;color:#15687e;letter-spacing:1.171px;-webkit-text-stroke:0.5px #15687e;">Left</span> <span class="t" style="left:333.00px;top:177.60px;font-size:21.5px;font-weight:400;color:#15687e;letter-spacing:0.592px;-webkit-text-stroke:0.5px #15687e;">Sit</span></span>
<span class="g"><span class="t" style="left:17.80px;top:210.94px;font-size:18.5px;font-weight:400;color:#212529;letter-spacing:-0.714px;-webkit-text-stroke:0.5px #212529;">Value</span> <span class="t" style="left:66.40px;top:210.94px;font-size:18.5px;font-weight:400;color:#212529;letter-spacing:-1.390px;-webkit-text-stroke:0.5px #212529;">On</span> <span class="t" style="left:94.70px;top:210.94px;font-size:18.5px;font-weight:400;color:#212529;letter-spacing:-0.057px;-webkit-text-stroke:0.5px #212529;">Hand:</span></span>
<span class="g"><span class="t" style="left:147.85px;top:211.94px;font-size:18.5px;font-weight:400;color:#15687e;letter-spacing:0.000px;">$</span> <span class="t" style="left:163.30px;top:210.94px;font-size:18.5px;font-weight:400;color:#15687e;letter-spacing:-0.906px;">0.00</span></span>
<span class="t" style="left:1243.80px;top:176.35px;font-size:21.2px;font-weight:400;color:#15687e;letter-spacing:1.549px;-webkit-text-stroke:0.7px #15687e;">2.00</span>
<span class="t" style="left:1347.75px;top:176.35px;font-size:21.2px;font-weight:400;color:#212529;letter-spacing:0.000px;-webkit-text-stroke:0.7px #212529;">+</span>
<span class="t" style="left:1415.60px;top:176.35px;font-size:21.2px;font-weight:400;color:#212529;letter-spacing:0.441px;-webkit-text-stroke:0.7px #212529;">10.00</span>
<span class="t" style="left:1525.50px;top:176.35px;font-size:21.2px;font-weight:400;color:#212529;letter-spacing:0.000px;-webkit-text-stroke:0.7px #212529;">-</span>
<span class="t" style="left:1594.00px;top:176.35px;font-size:21.2px;font-weight:400;color:#212529;letter-spacing:0.849px;-webkit-text-stroke:0.7px #212529;">0.00</span>
<span class="t" style="left:1698.75px;top:176.35px;font-size:21.2px;font-weight:400;color:#212529;letter-spacing:0.000px;-webkit-text-stroke:0.7px #212529;">=</span>
<span class="g"><span class="t" style="left:1756.50px;top:176.35px;font-size:21.2px;font-weight:400;color:#212529;letter-spacing:0.441px;-webkit-text-stroke:0.7px #212529;">12.00</span> <span class="t" style="left:1817.00px;top:176.35px;font-size:21.2px;font-weight:400;color:#212529;letter-spacing:1.680px;-webkit-text-stroke:0.7px #212529;">Units</span></span>
<span class="g"><span class="t" style="left:1232.00px;top:213.04px;font-size:18.5px;font-weight:400;color:#4c4c4c;letter-spacing:-1.590px;">On</span> <span class="t" style="left:1259.90px;top:213.04px;font-size:18.5px;font-weight:400;color:#4c4c4c;letter-spacing:-0.813px;">Hand</span></span>
<span class="t" style="left:1405.50px;top:213.04px;font-size:18.5px;font-weight:400;color:#4c4c4c;letter-spacing:-0.082px;">Incoming</span>
<span class="t" style="left:1578.00px;top:213.04px;font-size:18.5px;font-weight:400;color:#4c4c4c;letter-spacing:0.029px;">Outgoing</span>
<span class="t" style="left:1771.40px;top:213.04px;font-size:18.5px;font-weight:400;color:#4c4c4c;letter-spacing:-0.762px;">Forecasted</span>
<span class="t" style="left:30.20px;top:676.54px;font-size:18.5px;font-weight:400;color:#4c4c4c;letter-spacing:-0.530px;">Replenishment</span>
<span class="t" style="left:492.30px;top:676.54px;font-size:18.5px;font-weight:400;color:#4c4c4c;letter-spacing:-0.748px;">Receipt</span>
<span class="t" style="left:1026.30px;top:676.54px;font-size:18.5px;font-weight:400;color:#4c4c4c;letter-spacing:-0.375px;">Units</span>
<span class="g"><span class="t" style="left:1092.70px;top:676.54px;font-size:18.5px;font-weight:400;color:#4c4c4c;letter-spacing:-1.200px;">Used</span> <span class="t" style="left:1138.50px;top:676.54px;font-size:18.5px;font-weight:400;color:#4c4c4c;letter-spacing:-1.789px;">by</span></span>
<span class="t" style="left:1595.00px;top:676.54px;font-size:18.5px;font-weight:400;color:#4c4c4c;letter-spacing:-0.610px;">Delivery</span>
<span class="t" style="left:30.20px;top:732.24px;font-size:18.5px;font-weight:400;color:#15687e;letter-spacing:-1.199px;-webkit-text-stroke:0.8px #15687e;">P00012</span>
<span class="t" style="left:492.30px;top:732.24px;font-size:18.5px;font-weight:400;color:#4c4c4c;letter-spacing:-0.178px;">10/15/2022</span>
<span class="t" style="left:1024.80px;top:732.24px;font-size:18.5px;font-weight:400;color:#4c4c4c;letter-spacing:-1.027px;">10.00</span>
<span class="g"><span class="t" style="left:30.70px;top:786.04px;font-size:18.5px;font-weight:400;color:#212529;letter-spacing:-0.884px;">Forecasted</span> <span class="t" style="left:120.70px;top:786.04px;font-size:18.5px;font-weight:400;color:#212529;letter-spacing:-0.256px;">Inventory</span></span>
<span class="t" style="left:1024.80px;top:786.04px;font-size:18.5px;font-weight:400;color:#212529;letter-spacing:-1.027px;">12.00</span>
<span class="g"><span class="t" style="left:30.70px;top:839.94px;font-size:18.5px;font-weight:400;color:#4c4c4c;letter-spacing:-1.115px;">Requests</span> <span class="t" style="left:106.60px;top:839.94px;font-size:18.5px;font-weight:400;color:#4c4c4c;letter-spacing:0.186px;">for</span> <span class="t" style="left:134.30px;top:839.94px;font-size:18.5px;font-weight:400;color:#4c4c4c;letter-spacing:0.046px;">quotation</span></span>
<span class="t" style="left:1034.80px;top:839.94px;font-size:18.5px;font-weight:400;color:#4c4c4c;letter-spacing:-1.273px;">9.00</span>
<span class="t" style="left:1092.70px;top:839.94px;font-size:18.5px;font-weight:400;color:#15687e;letter-spacing:-1.339px;-webkit-text-stroke:0.8px #15687e;">P00013</span>
<span class="t" style="left:1155.10px;top:838.94px;font-size:18.5px;font-weight:400;color:#4c4c4c;letter-spacing:0.000px;">|</span>
<span class="t" style="left:1164.50px;top:839.94px;font-size:18.5px;font-weight:400;color:#15687e;letter-spacing:-1.239px;-webkit-text-stroke:0.8px #15687e;">P00014</span>
<span class="g"><span class="t" style="left:31.20px;top:893.04px;font-size:18.5px;font-weight:400;color:#4c4c4c;letter-spacing:-0.350px;">Component</span> <span class="t" style="left:130.10px;top:893.04px;font-size:18.5px;font-weight:400;color:#4c4c4c;letter-spacing:-1.189px;">of</span> <span class="t" style="left:150.60px;top:893.04px;font-size:18.5px;font-weight:400;color:#4c4c4c;letter-spacing:-0.437px;">Draft</span> <span class="t" style="left:194.50px;top:893.04px;font-size:18.5px;font-weight:400;color:#4c4c4c;letter-spacing:-0.511px;">MO</span></span>
<span class="t" style="left:1028.30px;top:893.04px;font-size:18.5px;font-weight:400;color:#4c4c4c;letter-spacing:-0.870px;">-3.00</span>
</body>
</html>
